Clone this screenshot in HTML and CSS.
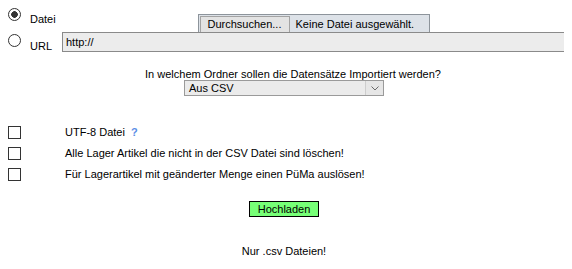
FILE: index.html
```html
<!DOCTYPE html>
<html lang="de">
<head>
  <meta charset="UTF-8">
  <title>CSV Import</title>
  <link rel="stylesheet" href="styles.css">
</head>
<body>
<form class="import-form">
  <div class="source">
    <label class="choice choice-file">
      <input type="radio" name="source" class="radio" checked>
      <span class="choice-text">Datei</span>
    </label>
    <div class="file-cell">
      <div class="file-box">
        <button type="button" class="file-btn">Durchsuchen...</button>
        <span class="file-name">Keine Datei ausgewählt.</span>
      </div>
    </div>

    <label class="choice choice-url">
      <input type="radio" name="source" class="radio">
      <span class="choice-text">URL</span>
    </label>
    <input type="text" class="url-input" value="http://">
  </div>

  <div class="centered folder">
    <p class="folder-question">In welchem Ordner sollen die Datensätze Importiert werden?</p>
    <div class="select">
      <span class="select-value">Aus CSV</span>
      <span class="select-arrow">
        <svg width="8" height="5" viewBox="0 0 8 5"><path d="M0.5 0.5 L4 4 L7.5 0.5" fill="none" stroke="#6a6a6a" stroke-width="1"/></svg>
      </span>
    </div>
  </div>

  <div class="options">
    <label class="option">
      <input type="checkbox" class="check">
      <span>UTF-8 Datei <span class="help">?</span></span>
    </label>
    <label class="option">
      <input type="checkbox" class="check">
      <span>Alle Lager Artikel die nicht in der CSV Datei sind löschen!</span>
    </label>
    <label class="option">
      <input type="checkbox" class="check">
      <span>Für Lagerartikel mit geänderter Menge einen PüMa auslösen!</span>
    </label>
  </div>

  <div class="centered">
    <button type="submit" class="upload-btn">Hochladen</button>
  </div>

  <p class="centered note">Nur .csv Dateien!</p>
</form>
</body>
</html>
```

FILE: styles.css
```css
* {
  box-sizing: border-box;
}

body {
  margin: 8px;
  background: #fff;
  color: #000;
  font: 11px "Liberation Sans", Arial, sans-serif;
}

.import-form {
  width: 557px;
}

/* Quelle: Datei oder URL */
.source {
  display: grid;
  grid-template-columns: 54px 1fr;
}

.choice {
  display: flex;
  align-items: flex-start;
  gap: 9px;
  line-height: 13px;
}

.radio,
.check {
  appearance: none;
  width: 13px;
  height: 13px;
  margin: 0;
  flex: none;
  border: 1px solid #333;
  background: #fff;
}

.radio {
  border-radius: 50%;
}

.radio:checked {
  background: radial-gradient(circle, #333 0, #333 3px, #fff 3.6px);
}

.choice-file .choice-text {
  margin-top: 5px;
}

.choice-url .radio {
  margin-top: 2px;
}

.choice-url .choice-text {
  margin-top: 8px;
}

.file-cell {
  display: flex;
  justify-content: center;
  padding-top: 6px;
}

.file-box {
  display: flex;
  width: 232px;
  height: 18px;
  padding: 1px 0 0 1px;
  border: 1px solid #8d949b;
  border-bottom: 0;
  background: #dde2e8;
}

.file-btn {
  width: 90px;
  margin: 0;
  padding: 0;
  border: 1px solid #a3a3a3;
  border-bottom: 0;
  background: #e3e3e3;
  color: #000;
  font: inherit;
  line-height: 15px;
}

.file-name {
  padding-left: 6px;
  line-height: 16px;
}

.url-input {
  width: 100%;
  height: 20px;
  margin: 0;
  padding: 0 3px;
  border: 1px solid #8a8a8a;
  background: #ececec;
  color: #000;
  font: inherit;
}

/* Zentrierte Bereiche */
.centered {
  display: flex;
  flex-direction: column;
  align-items: center;
  padding-right: 5px;
  margin: 0;
}

.folder {
  margin-top: 15px;
}

.folder-question {
  margin: 0 0 0 18px;
  line-height: 12px;
}

.select {
  display: flex;
  width: 200px;
  height: 16px;
  border: 1px solid #9a9a9a;
  background: #ebebeb;
}

.select-value {
  flex: 1;
  padding-left: 4px;
  line-height: 14px;
}

.select-arrow {
  display: flex;
  align-items: center;
  justify-content: center;
  width: 18px;
  border-left: 1px solid #cdcdcd;
  background: #e6e6e6;
}

/* Optionen */
.options {
  margin-top: 26px;
}

.option {
  display: grid;
  grid-template-columns: 57px 1fr;
  align-items: center;
  height: 21px;
  line-height: 13px;
}

.help {
  margin-left: 3px;
  color: #5b8ee6;
  font-weight: bold;
}

.upload-btn {
  height: 16px;
  margin: 16px 0 0;
  padding: 0 8px;
  border: 1px solid #000;
  background: #77ff77;
  color: #000;
  font: inherit;
  line-height: 14px;
}

.note {
  margin-top: 28px;
  line-height: 13px;
}
```
